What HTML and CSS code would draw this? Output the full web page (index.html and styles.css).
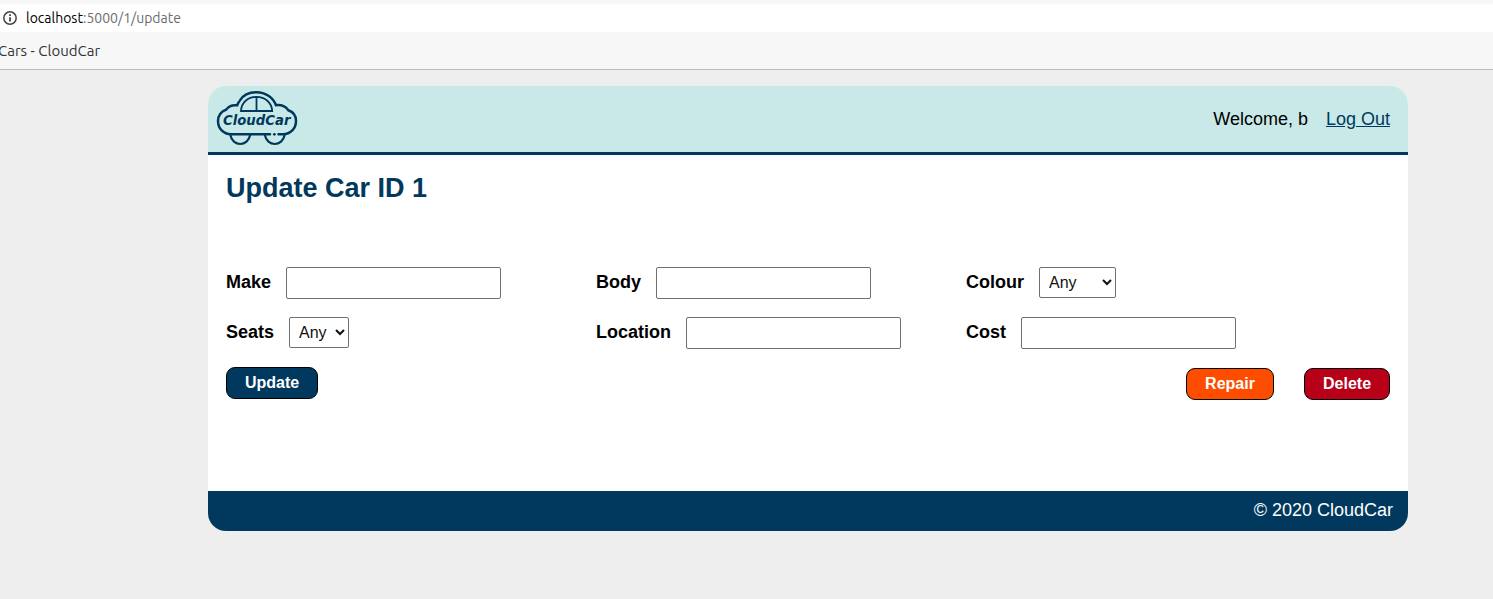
FILE: index.html
```html
<!DOCTYPE html>
<html lang="en">
<head>
<meta charset="utf-8">
<title>Update Car - CloudCar</title>
<link rel="stylesheet" href="styles.css">
</head>
<body>
<div class="browser">
  <div class="address">
    <svg class="info" width="14" height="14" viewBox="0 0 14 14"><circle cx="7" cy="7" r="6.200" fill="none" stroke="#454545" stroke-width="1.500"/><path d="M7 6.200v4.400M7 3.300v1.700" stroke="#454545" stroke-width="1.800"/></svg>
    <span class="url"><span class="host">localhost</span>:5000/1/update</span>
  </div>
  <div class="bookmarks"><span class="bookmark">Cars - CloudCar</span></div>
</div>
<div class="card">
  <header class="header">
    <svg class="logo" width="82" height="56" viewBox="0 0 82 56" role="img">
      <g fill="none" stroke="#00395d" stroke-width="2.500" stroke-linecap="round">
        <path d="M24 10.300C27 5.300 33 2.200 40.500 2.200C49.500 2.200 57 7.500 60 15.200C65.500 14.700 70 16.800 72.300 20.300C77.500 22 80 26.300 80 31C80 38.500 74.500 44.300 67 44.300H62.500M54 44.300H15C7.500 44.300 2 38.500 2 31C2 25.500 5.500 21 10 19.800C12.500 16.300 17 14.700 21.200 15.300C21.700 14 22.200 12.800 23 11.800"/>
        <path stroke-width="2.200" d="M14.500 45.500C15.500 50.500 19.500 54 24.200 54C29 54 33 50.500 34 45.500M49 45.500C50 50.500 54 54 58.800 54C63.500 54 67.500 50.500 68.500 45.500"/>
        <path stroke-width="1.800" d="M25 21C25.300 12.500 32 6.900 40.500 6.900C49 6.900 55.700 12.500 56.200 21ZM40.500 7V21"/>
      </g>
      <circle cx="58.400" cy="44.300" r="1.400" fill="#00395d"/>
      <text class="logo-text" x="7" y="35.300" textLength="67.500" lengthAdjust="spacingAndGlyphs">CloudCar</text>
    </svg>
    <div class="account"><span>Welcome, b</span><a class="logout" href="#">Log Out</a></div>
  </header>
  <main class="main">
    <h1 class="title">Update Car ID 1</h1>
    <form class="form">
      <div class="field"><label for="make">Make</label><input id="make" type="text"></div>
      <div class="field"><label for="body">Body</label><input id="body" type="text"></div>
      <div class="field"><label for="colour">Colour</label><select id="colour" class="wide"><option>Any</option></select></div>
      <div class="field"><label for="seats">Seats</label><select id="seats" class="narrow"><option>Any</option></select></div>
      <div class="field"><label for="location">Location</label><input id="location" type="text"></div>
      <div class="field"><label for="cost">Cost</label><input id="cost" type="text"></div>
    </form>
    <div class="actions">
      <button class="button update">Update</button>
      <div class="secondary">
        <button class="button repair">Repair</button>
        <button class="button delete">Delete</button>
      </div>
    </div>
  </main>
  <footer class="footer">© 2020 CloudCar</footer>
</div>
</body>
</html>
```
FILE: styles.css
```css
* { box-sizing: border-box; }
body { margin: 0; height: 599px; overflow: hidden; background: #eee; font: 18px/21px "Liberation Sans", Arial, sans-serif; color: #000; }
.browser { height: 70px; padding-top: 4px; background: #f7f7f7; border-bottom: 1px solid #bdbdbd; font-family: Ubuntu, "Noto Sans", sans-serif; }
.address { display: flex; align-items: center; height: 28px; padding-left: 3px; background: #fff; }
.info { margin-right: 9px; }
.url { color: #6c6c6c; font-size: 14px; }
.host { color: #000; }
.bookmarks { display: flex; align-items: center; height: 37px; }
.bookmark { margin-left: -2px; color: #333; font-size: 15px; }
.card { width: 1200px; margin: 16px 0 0 208px; border-radius: 18px; overflow: hidden; background: #fff; }
.header { display: flex; justify-content: space-between; height: 69px; padding: 4px 18px 0 8px; background: #c8e9e7; border-bottom: 3px solid #00395d; }
.logo-text { font: italic bold 14px "DejaVu Sans", sans-serif; fill: #00395d; }
.account { display: flex; gap: 18px; padding-top: 19px; }
.logout { color: #00395d; }
.main { height: 336px; padding: 18px 18px 0; }
.title { margin: 0; color: #00395d; font-size: 27px; line-height: 31px; }
.form { display: grid; grid-template-columns: repeat(3, 370px); grid-auto-rows: 32px; row-gap: 18px; margin-top: 63px; }
.field { display: flex; align-items: flex-start; gap: 15px; }
.field label { padding-top: 5px; font-weight: bold; }
.field input { width: 215px; height: 32px; border: 1px solid #6f6f6f; border-radius: 2px; background: #fff; }
.field select { height: 31px; padding: 0 0 0 5px; border: 1px solid #6f6f6f; border-radius: 2px; background-color: #fff; color: #111; font: 16px "Liberation Sans", Arial, sans-serif; }
.wide { width: 77px; }
.narrow { width: 60px; }
.actions { display: flex; justify-content: space-between; margin-top: 18px; }
.secondary { display: flex; gap: 30px; padding-top: 1px; }
.button { height: 32px; padding: 0 18px; border: 1px solid #000; border-radius: 9px; color: #fff; font: bold 16px "Liberation Sans", Arial, sans-serif; }
.update { width: 92px; background: #00395d; }
.repair { width: 88px; background: #ff4d00; }
.delete { width: 86px; background: #b90019; }
.footer { height: 40px; padding: 9px 15px 0; background: #00395d; color: #fff; text-align: right; }
```
